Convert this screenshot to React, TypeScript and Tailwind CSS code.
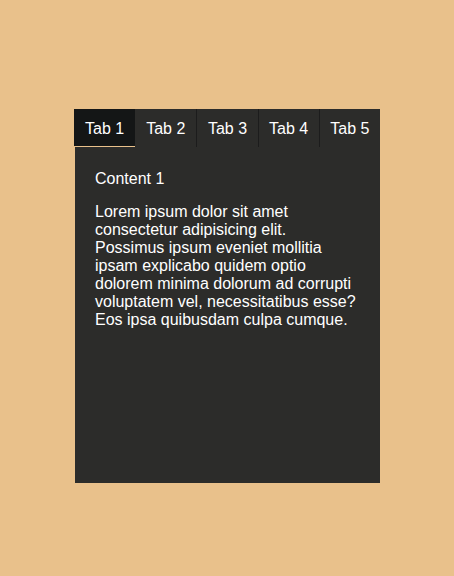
import { useState } from "react";

const tabs = ["Tab 1", "Tab 2", "Tab 3", "Tab 4", "Tab 5"];

const text =
  "Lorem ipsum dolor sit amet consectetur adipisicing elit. Possimus ipsum eveniet mollitia ipsam explicabo quidem optio dolorem minima dolorum ad corrupti voluptatem vel, necessitatibus esse? Eos ipsa quibusdam culpa cumque.";

export default function App() {
  const [active, setActive] = useState(0);

  return (
    <div className="min-h-[576px] bg-[#e9c18b] pt-[109px] font-['Liberation_Sans',Arial,sans-serif]">
      <div className="mx-auto w-[306px]">
        <div className="flex h-[38px]">
          {tabs.map((t, i) => (
            <button
              key={t}
              onClick={() => setActive(i)}
              className={
                "h-full w-[61.2px] pt-px text-base text-white " +
                (i === active
                  ? "bg-[#141616] shadow-[inset_0_-1px_0_#e9c18b]"
                  : "bg-[#2c2c2a] " + (i > 1 ? "border-l border-[#1c1c1c]" : ""))
              }
            >
              {t}
            </button>
          ))}
        </div>
        <div className="ml-px h-[336px] bg-[#2c2c2a] pl-5 pr-[23px] pt-[23px] text-base leading-[18px] text-white">
          <p>Content {active + 1}</p>
          <p className="mt-[15px]">{text}</p>
        </div>
      </div>
    </div>
  );
}
